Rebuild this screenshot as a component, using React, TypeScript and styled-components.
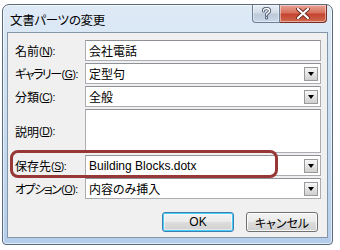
import * as React from "react";
import styled, { createGlobalStyle } from "styled-components";

const GlobalStyle = createGlobalStyle`
  html, body {
    margin: 0;
    padding: 0;
    background: #ffffff;
  }
  body {
    width: 340px;
    height: 250px;
    overflow: hidden;
    font-family: "Liberation Sans", "Noto Sans CJK JP", sans-serif;
    font-feature-settings: "palt";
  }
`;

const Page = styled.div`
  padding: 4px 0 0 2px;
`;

const Window = styled.div`
  box-sizing: border-box;
  width: 331px;
  height: 241px;
  border: 1px solid #5c6b7c;
  border-radius: 7px 7px 4px 4px;
  background: linear-gradient(180deg, #dfeaf6 0%, #cddff1 40%, #b4cdea 100%);
  padding: 0 4px 6px 4px;
  display: flex;
  flex-direction: column;
  box-shadow: inset 0 0 0 1px rgba(255, 255, 255, 0.6);
`;

const TitleBar = styled.div`
  height: 27px;
  display: flex;
  align-items: flex-start;
  justify-content: space-between;
`;

const Title = styled.div`
  padding: 8px 0 0 3px;
  font-size: 12.5px;
  line-height: 16px;
  color: #000;
  letter-spacing: -0.3px;
`;

const Caption = styled.div`
  display: flex;
  margin-right: 1px;
`;

const CaptionButton = styled.div<{ $close?: boolean }>`
  box-sizing: border-box;
  width: ${(p) => (p.$close ? "47px" : "28px")};
  height: 18px;
  display: flex;
  align-items: center;
  justify-content: center;
  border: 1px solid ${(p) => (p.$close ? "#7a2d22" : "#6d7f95")};
  border-top: none;
  border-radius: ${(p) => (p.$close ? "0 0 4px 0" : "0 0 0 4px")};
  border-left: ${(p) => (p.$close ? "none" : "1px solid #6d7f95")};
  background: ${(p) =>
    p.$close
      ? "linear-gradient(180deg, #e8a597 0%, #d8705d 45%, #c44430 55%, #d06a4f 100%)"
      : "linear-gradient(180deg, #e9eef5 0%, #d2dbe7 45%, #bcc9d9 55%, #cbd7e6 100%)"};
  box-shadow: inset 0 0 0 1px rgba(255, 255, 255, 0.45);
`;

const Client = styled.div`
  position: relative;
  box-sizing: border-box;
  flex: 1;
  border: 1px solid #8696a9;
  background: #f0f0f0;
  padding: 7px 6px 0 7px;
  display: flex;
  flex-direction: column;
`;

const Form = styled.div`
  display: grid;
  grid-template-columns: 70px 1fr;
  grid-template-rows: 21px 21px 21px 44px 21px 21px;
  row-gap: 2px;
`;

const Label = styled.label<{ $tight?: boolean }>`
  display: flex;
  align-items: center;
  font-size: 12px;
  color: #000;
  white-space: nowrap;
  letter-spacing: ${(p) => (p.$tight ? "-1.5px" : "0")};

  span {
    font-size: 10.5px;
    letter-spacing: -0.4px;
    margin-left: ${(p) => (p.$tight ? "1px" : "0")};
  }
  u {
    text-decoration: underline;
    text-underline-offset: 1px;
  }
`;

const Field = styled.div`
  box-sizing: border-box;
  display: flex;
  align-items: center;
  border: 1px solid #abadb3;
  border-top-color: #8e9198;
  background: #ffffff;
  padding: 0 2px 0 3px;
  font-size: 12px;
  color: #000;
`;

const FieldText = styled.span`
  flex: 1;
  white-space: nowrap;
  overflow: hidden;
`;

const DropButton = styled.div`
  box-sizing: border-box;
  width: 14px;
  height: 14px;
  border: 1px solid #9a9a9a;
  background: linear-gradient(180deg, #f7f7f7 0%, #e4e4e4 50%, #cfcfcf 100%);
  display: flex;
  align-items: center;
  justify-content: center;
`;

const Arrow = styled.div`
  width: 0;
  height: 0;
  border-left: 3.5px solid transparent;
  border-right: 3.5px solid transparent;
  border-top: 4px solid #000;
  margin-top: 1px;
`;

const Highlight = styled.div`
  position: absolute;
  left: 2px;
  top: 117px;
  width: 268px;
  height: 28px;
  box-sizing: border-box;
  border: 3px solid #973737;
  border-radius: 8px;
  pointer-events: none;
`;

const ButtonRow = styled.div`
  display: flex;
  justify-content: flex-end;
  gap: 12px;
  margin-top: 13px;
  padding-right: 3px;
`;

const Button = styled.div<{ $default?: boolean }>`
  box-sizing: border-box;
  width: 72px;
  height: 20px;
  display: flex;
  align-items: center;
  justify-content: center;
  font-size: 12px;
  color: #000;
  border: 1px solid ${(p) => (p.$default ? "#3c7fb1" : "#707070")};
  border-radius: 3px;
  background: linear-gradient(180deg, #f2f2f2 0%, #ebebeb 48%, #dddddd 52%, #cfcfcf 100%);
  box-shadow: ${(p) =>
    p.$default
      ? "inset 0 0 0 1px #48cdf6, inset 0 0 0 2px rgba(255,255,255,0.5)"
      : "inset 0 0 0 1px rgba(255,255,255,0.8)"};
`;

// outlined "?" like the Aero caption glyph
const HelpIcon = () => (
  <svg width="11" height="13" viewBox="0 0 11 13">
    <g fill="none" strokeLinecap="round">
      <path d="M2.5 4 C2.5 2 4 1.5 5.5 1.5 C7.2 1.5 8.5 2.4 8.5 4 C8.5 5.6 6.2 6 5.6 7.3 L5.6 8" stroke="#4a5a70" strokeWidth="3.2" />
      <path d="M2.5 4 C2.5 2 4 1.5 5.5 1.5 C7.2 1.5 8.5 2.4 8.5 4 C8.5 5.6 6.2 6 5.6 7.3 L5.6 8" stroke="#ffffff" strokeWidth="1.4" />
      <path d="M5.6 10.6 L5.6 10.8" stroke="#4a5a70" strokeWidth="3.2" />
      <path d="M5.6 10.6 L5.6 10.8" stroke="#ffffff" strokeWidth="1.4" />
    </g>
  </svg>
);

const CloseIcon = () => (
  <svg width="14" height="11" viewBox="0 0 14 11">
    <path d="M2 1 L12 10 M12 1 L2 10" stroke="#6b2a20" strokeWidth="4" strokeLinecap="round" />
    <path d="M2 1 L12 10 M12 1 L2 10" stroke="#ffffff" strokeWidth="2.2" strokeLinecap="round" />
  </svg>
);

interface Row {
  label: string;
  key: string;
  value: string;
  combo: boolean;
  tight?: boolean;
}

const rows: Array<Row> = [
  { label: "名前", key: "N", value: "会社電話", combo: false },
  { label: "ギャラリー", key: "G", value: "定型句", combo: true, tight: true },
  { label: "分類", key: "C", value: "全般", combo: true },
  { label: "説明", key: "D", value: "", combo: false },
  { label: "保存先", key: "S", value: "Building Blocks.dotx", combo: true },
  { label: "オプション", key: "O", value: "内容のみ挿入", combo: true, tight: true },
];

const App: React.FC = () => (
  <>
    <GlobalStyle />
    <Page>
      <Window>
        <TitleBar>
          <Title>文書パーツの変更</Title>
          <Caption>
            <CaptionButton>
              <HelpIcon />
            </CaptionButton>
            <CaptionButton $close>
              <CloseIcon />
            </CaptionButton>
          </Caption>
        </TitleBar>
        <Client>
          <Form>
            {rows.map((r) => (
              <React.Fragment key={r.key}>
                <Label $tight={r.tight}>
                  {r.label}
                  <span>
                    (<u>{r.key}</u>):
                  </span>
                </Label>
                <Field>
                  <FieldText>{r.value}</FieldText>
                  {r.combo && (
                    <DropButton>
                      <Arrow />
                    </DropButton>
                  )}
                </Field>
              </React.Fragment>
            ))}
          </Form>
          <ButtonRow>
            <Button $default>OK</Button>
            <Button>キャンセル</Button>
          </ButtonRow>
          <Highlight />
        </Client>
      </Window>
    </Page>
  </>
);

export default App;
